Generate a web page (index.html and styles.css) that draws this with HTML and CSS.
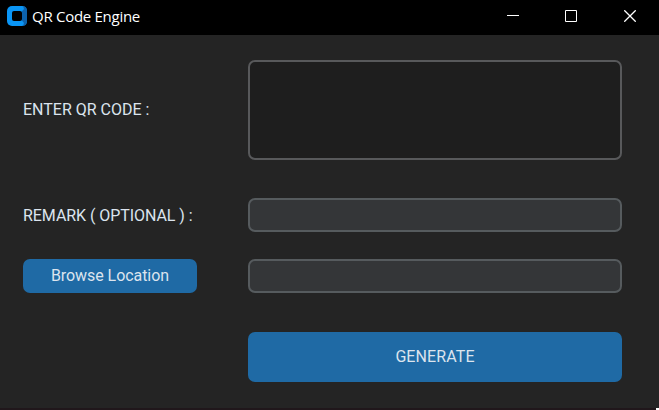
FILE: index.html
```html
<!DOCTYPE html>
<html lang="en">
<head>
<meta charset="utf-8">
<title>QR Code Engine</title>
<link rel="stylesheet" href="styles.css">
</head>
<body>
<div class="window">
  <header class="titlebar">
    <svg class="logo" width="20" height="20" viewBox="0 0 20 20">
      <rect width="20" height="20" rx="5" fill="#0a95f5"/>
      <path d="M16 0Q20 .5 20 5V15Q20 19.500 16 20L17 17L14.500 14V6L17 3Z" fill="#0d62ac"/>
      <rect x="5" y="5" width="10" height="10" rx="2" fill="#000"/>
    </svg>
    <span class="title">QR Code Engine</span>
    <div class="controls">
      <svg width="12" height="12" viewBox="0 0 12 12"><path d="M0 5.500H12"/></svg>
      <svg width="12" height="12" viewBox="0 0 12 12"><path d="M.5.5H11.500V11.500H.5Z"/></svg>
      <svg class="close" width="12" height="12" viewBox="0 0 12 12"><path d="M.3.3L11.700 11.700M11.700.3L.3 11.700"/></svg>
    </div>
  </header>
  <main class="form">
    <label class="label" for="code">ENTER QR CODE :</label>
    <textarea class="field area" id="code"></textarea>
    <label class="label remark-label" for="remark">REMARK ( OPTIONAL ) :</label>
    <input class="field remark" id="remark">
    <button class="button browse">Browse Location</button>
    <input class="field location" aria-label="Location">
    <button class="button generate">GENERATE</button>
  </main>
  <footer class="edge"><span class="corner"></span></footer>
</div>
</body>
</html>
```
FILE: styles.css
```css
* { box-sizing: border-box; }
body { margin: 0; background: #242424; overflow: hidden; }
.window { width: 659px; height: 410px; display: flex; flex-direction: column; }
.titlebar { height: 35px; background: #000; display: flex; align-items: center; padding: 0 23px 3px 7px; }
.logo { flex: none; }
.title { margin-left: 5px; color: #fff; font: 15px/20px "Open Sans", "Noto Sans", sans-serif; letter-spacing: -0.28px; white-space: nowrap; }
.controls { margin-left: auto; display: flex; gap: 46px; }
.controls svg { fill: none; stroke: #fff; stroke-width: 1; }
.controls .close { margin-left: 1px; stroke-width: 1.3; }
.form {
  flex: 1; display: grid; padding: 25px 37px 0 23px;
  grid-template-columns: 174px 374px; column-gap: 51px;
  grid-template-rows: 100px 38px 34px 27px 34px 39px 50px;
  align-content: start;
}
.label { align-self: center; color: #dce4ee; font: 16px/20px Roboto, sans-serif; white-space: nowrap; }
.remark-label { padding-top: 2px; letter-spacing: -0.06px; }
.field { width: 100%; margin: 0; padding: 6px; border: 2px solid #565b5e; border-radius: 7px; background: #343638; color: #dce4ee; font: 16px Roboto, sans-serif; outline: 0; resize: none; }
.area { height: 100px; background: #1e1e1e; border-color: #58595b; }
.remark, .remark-label { grid-row: 3; }
.browse, .location { grid-row: 5; }
.button { margin: 0; padding: 0; border: 0; border-radius: 7px; background: #1f6aa5; color: #dce4ee; font: 16px/20px Roboto, sans-serif; }
.browse { letter-spacing: -0.06px; }
.generate { grid-row: 7; grid-column: 2; letter-spacing: 0.1px; }
.edge { height: 2px; display: flex; justify-content: flex-end; background: #20171b; }
.corner { width: 3px; background: #fff; }
```
